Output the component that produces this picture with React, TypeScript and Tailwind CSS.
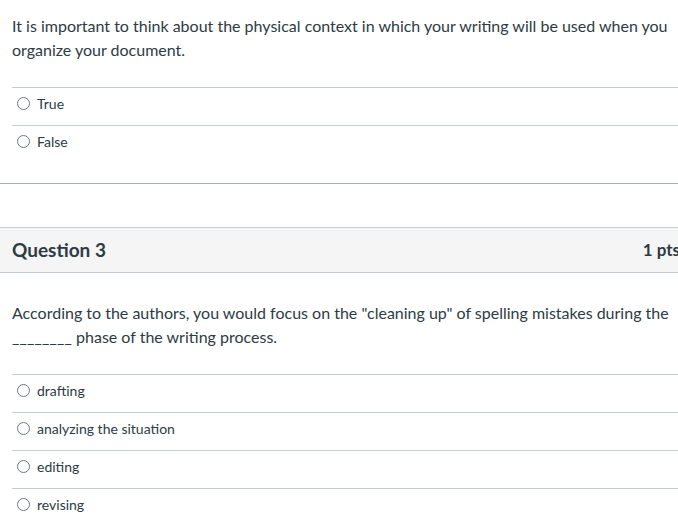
import React from 'react';

// Quiz page fragment: end of one question, then Question 3
const Radio: React.FC = () => (
    <span className="inline-block w-[13px] h-[13px] rounded-full border border-[#6b7780] bg-white shrink-0"></span>
);

const Answer: React.FC<{ label: string }> = ({ label }) => (
    <div className="h-[38px] border-t border-[#c7cdd1] flex items-center gap-[7px] pl-[5px] pb-[6px] text-[14px] text-[#2d3b45]">
        <Radio />
        <span>{label}</span>
    </div>
);

const App: React.FC = () => {
    return (
        <div className="w-full overflow-hidden bg-white" style={{ fontFamily: 'Lato, "Noto Sans", sans-serif' }}>
            <div className="w-[692px]">
                {/* previous question body */}
                <div className="border-b border-[#a5afb5] pb-[20px]">
                    <div className="pt-[14px] px-[12px] text-[16px] leading-[24px] text-[#2d3b45]">
                        It is important to think about the physical context in which your writing will be used when you organize your document.
                    </div>
                    <div className="mt-[25px] ml-[12px]">
                        <Answer label="True" />
                        <Answer label="False" />
                    </div>
                </div>

                {/* Question 3 */}
                <div className="mt-[43px]">
                    <div className="h-[46px] bg-[#f5f5f5] border-y border-[#c7cdd1] flex items-center justify-between px-[12px] text-[#2d3b45]">
                        <span className="text-[19px] font-bold">Question 3</span>
                        <span className="text-[17px] font-bold">1 pts</span>
                    </div>
                    <div className="pt-[28px] px-[12px] text-[16px] leading-[24px] text-[#2d3b45]">
                        According to the authors, you would focus on the "cleaning up" of spelling mistakes during the <span className="tracking-[0.15px]">________</span> phase of the writing process.
                    </div>
                    <div className="mt-[25px] ml-[12px]">
                        <Answer label="drafting" />
                        <Answer label="analyzing the situation" />
                        <Answer label="editing" />
                        <Answer label="revising" />
                    </div>
                </div>
            </div>
        </div>
    );
};

export default App;
